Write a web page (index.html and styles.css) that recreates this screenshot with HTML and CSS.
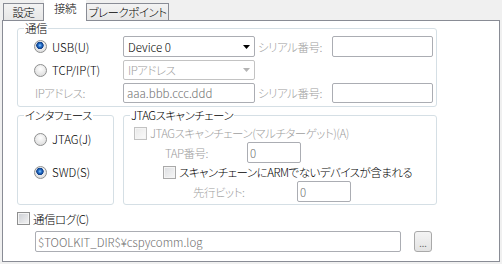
FILE: index.html
```html
<!DOCTYPE html>
<html lang="ja">
<head>
    <meta charset="UTF-8">
    <title>接続</title>
    <link rel="stylesheet" href="styles.css">
</head>
<body>
    <div class="tabs">
        <div class="tab tab-settings">設定</div>
        <div class="tab tab-active">接続</div>
        <div class="tab tab-break">ブレークポイント</div>
    </div>

    <div class="panel">
        <div class="group group-comm">
            <span class="group-title">通信</span>
            <div class="comm-grid">
                <label class="opt"><span class="radio checked"></span>USB(U)</label>
                <div class="combo">
                    <span>Device 0</span>
                    <svg class="arrow" width="7" height="4" viewBox="0 0 7 4"><path d="M0 0h7L3.5 4z"/></svg>
                </div>
                <span class="field-label dim">シリアル番号:</span>
                <div class="edit"></div>

                <label class="opt"><span class="radio"></span>TCP/IP(T)</label>
                <div class="combo combo-off">
                    <span>IPアドレス</span>
                    <svg class="arrow" width="7" height="4" viewBox="0 0 7 4"><path d="M0 0h7L3.5 4z"/></svg>
                </div>

                <span class="field-label dim ip-label">IPアドレス:</span>
                <div class="edit">aaa.bbb.ccc.ddd</div>
                <span class="field-label dim">シリアル番号:</span>
                <div class="edit"></div>
            </div>
        </div>

        <div class="group-row">
            <div class="group group-iface">
                <span class="group-title">インタフェース</span>
                <div class="iface-list">
                    <label class="opt"><span class="radio"></span>JTAG(J)</label>
                    <label class="opt"><span class="radio checked"></span>SWD(S)</label>
                </div>
            </div>

            <div class="group group-jtag">
                <span class="group-title">JTAGスキャンチェーン</span>
                <div class="jtag-body">
                    <label class="jtag-row row-multi dim"><span class="check check-off"></span>JTAGスキャンチェーン(マルチターゲット)(A)</label>
                    <div class="jtag-row row-tap">
                        <span class="dim tap-label">TAP番号:</span>
                        <div class="edit small-edit">0</div>
                    </div>
                    <label class="jtag-row row-arm"><span class="check check-light"></span>スキャンチェーンにARMでないデバイスが含まれる</label>
                    <div class="jtag-row row-lead">
                        <span class="dim lead-label">先行ビット:</span>
                        <div class="edit small-edit">0</div>
                    </div>
                </div>
            </div>
        </div>

        <label class="log-row"><span class="check"></span>通信ログ(C)</label>
        <div class="path-row">
            <div class="edit path">$TOOLKIT_DIR$¥cspycomm.log</div>
            <button class="browse">...</button>
        </div>
    </div>
</body>
</html>
```

FILE: styles.css
```css
* {
    box-sizing: border-box;
    margin: 0;
    padding: 0;
}

body {
    font-family: "Noto Sans CJK JP", sans-serif;
    font-size: 11.5px;
    font-weight: 300;
    line-height: 14px;
    letter-spacing: -0.5px;
    font-feature-settings: "palt";
    color: #000;
    background: #f0f0f0;
    white-space: nowrap;
}

.tabs {
    display: flex;
    align-items: flex-end;
    height: 20px;
    padding-left: 3px;
}

.tab {
    height: 17px;
    border: 1px solid #898c95;
    border-bottom: none;
    background: linear-gradient(#f3f3f3, #e6e6e6);
    text-align: center;
    line-height: 16px;
}

.tab-settings {
    width: 41px;
}

.tab-active {
    width: 42px;
    height: 21px;
    margin-bottom: -1px;
    border: none;
    background: #fff;
    position: relative;
    z-index: 1;
}

.tab-break {
    width: 83px;
}

.panel {
    height: 242px;
    margin: 0 2px;
    padding: 7px 0 0 14px;
    background: #fff;
    border: 1px solid #898c95;
}

.group {
    position: relative;
    border: 1px solid #d5dfe5;
    border-radius: 3px;
}

.group-title {
    position: absolute;
    left: 6px;
    top: -8px;
    padding: 0 1px;
    background: #fff;
}

.group-comm {
    width: 420px;
    height: 79px;
    margin-bottom: 8px;
}

.comm-grid {
    display: grid;
    grid-template-columns: 89px 132px 77px 101px;
    grid-template-rows: 21px 20px 20px;
    row-gap: 3px;
    padding: 7px 0 0 16px;
}

.opt {
    display: flex;
    align-items: center;
    gap: 5px;
    letter-spacing: 0;
}

.radio {
    flex: none;
    width: 13px;
    height: 13px;
    border: 1px solid #8e8f8f;
    border-radius: 50%;
    background: radial-gradient(circle at 50% 35%, #fff, #d6d6d6);
}

.radio.checked {
    background:
        radial-gradient(circle at 45% 40%, #8fd0ff 0, #2a74cf 1.6px, #0b3c86 3.4px, transparent 4px),
        radial-gradient(circle at 50% 35%, #fff, #d6d6d6);
}

.combo {
    display: flex;
    align-items: center;
    justify-content: space-between;
    padding: 0 4px 0 4px;
    letter-spacing: 0;
    background: #fff;
    border: 1px solid #abadb3;
    border-radius: 2px;
}

.combo-off {
    color: #a0a0a0;
    letter-spacing: -0.5px;
    border-color: #c3c3c3;
}

.arrow {
    fill: currentColor;
}

.combo-off .arrow {
    fill: #b4b4b4;
}

.field-label {
    display: flex;
    align-items: center;
    padding-left: 3px;
}

.ip-label {
    grid-column: 1;
    padding-left: 1px;
}

.dim {
    color: #a0a0a0;
}

.edit {
    display: flex;
    align-items: center;
    padding: 0 3px;
    color: #6d6d6d;
    letter-spacing: 0;
    background: #fff;
    border: 1px solid #abadb3;
    border-radius: 2px;
}

.group-row {
    display: flex;
    gap: 9px;
}

.group-iface {
    width: 97px;
    height: 90px;
}

.iface-list {
    display: flex;
    flex-direction: column;
    gap: 17px;
    padding: 15px 0 0 16px;
}

.iface-list .opt {
    height: 16px;
}

.group-jtag {
    width: 314px;
    height: 90px;
}

.jtag-body {
    display: flex;
    flex-direction: column;
    gap: 1px;
    padding-top: 9px;
}

.jtag-row {
    display: flex;
    align-items: center;
}

.row-multi {
    height: 16px;
    padding-left: 10px;
    gap: 3px;
}

.row-tap {
    height: 21px;
    padding-left: 41px;
}

.tap-label {
    width: 82px;
}

.row-arm {
    height: 16px;
    padding-left: 39px;
    gap: 3px;
}

.row-lead {
    height: 21px;
    padding-left: 69px;
}

.lead-label {
    width: 104px;
}

.small-edit {
    width: 54px;
    height: 21px;
    padding-left: 2px;
}

.check {
    flex: none;
    width: 13px;
    height: 13px;
    border: 1px solid #8e8f8f;
    background: linear-gradient(135deg, #cbced3, #f4f4f4);
    box-shadow: inset 0 0 0 1px #f4f4f4;
}

.check-light {
    border-color: #a9a9a9;
    background: linear-gradient(135deg, #dcdee1, #f7f7f7);
}

.check-off {
    border-color: #c2c2c2;
    background: linear-gradient(135deg, #e8e8e8, #fbfbfb);
}

.log-row {
    display: flex;
    align-items: center;
    gap: 3px;
    height: 13px;
    margin-top: 7px;
}

.path-row {
    display: flex;
    gap: 13px;
    height: 21px;
    margin-top: 6px;
    padding-left: 18px;
}

.path {
    width: 366px;
    padding-left: 2px;
}

.browse {
    width: 18px;
    font-family: "Noto Sans CJK JP", sans-serif;
    font-size: 9px;
    line-height: 9px;
    padding-top: 4px;
    letter-spacing: 0;
    color: #666;
    background: linear-gradient(#f4f4f4, #e3e3e3);
    border: 1px solid #a9a9a9;
    border-radius: 3px;
}
```
